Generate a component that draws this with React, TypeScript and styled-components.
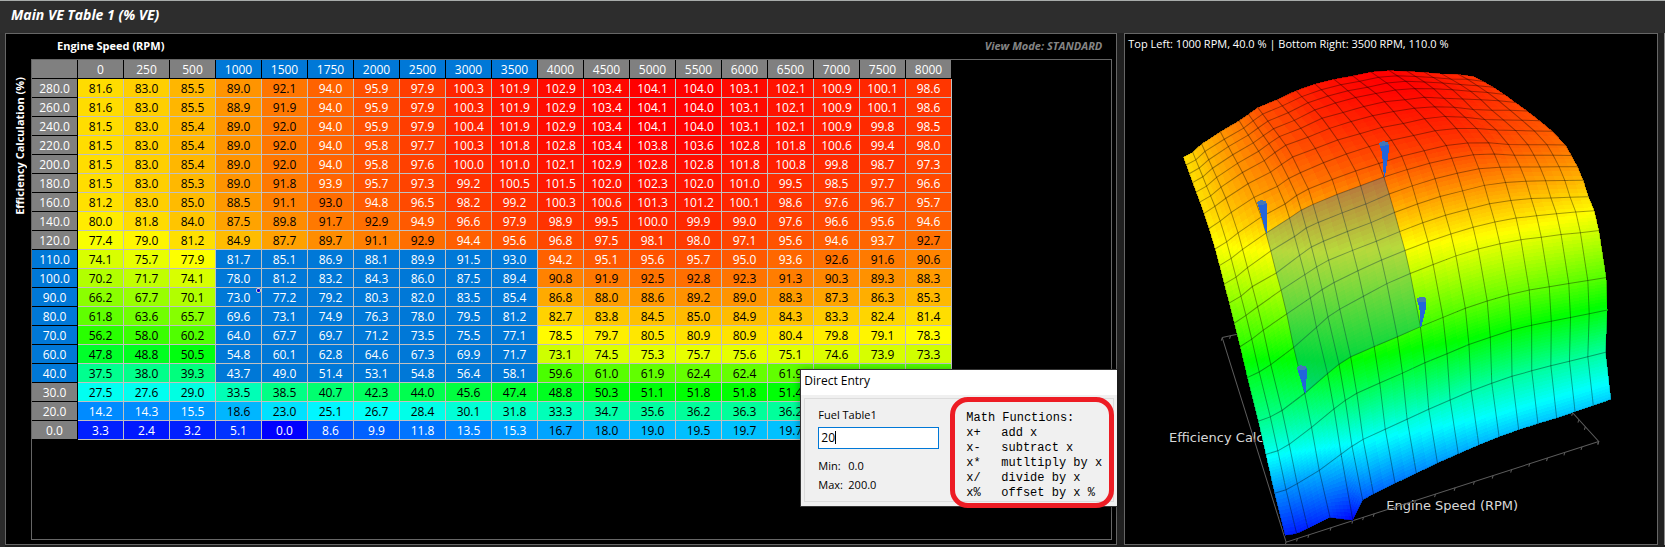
import React from "react";
import styled, { createGlobalStyle } from "styled-components";

const RPM = [0, 250, 500, 1000, 1500, 1750, 2000, 2500, 3000, 3500, 4000, 4500, 5000, 5500, 6000, 6500, 7000, 7500, 8000];

// Each row: engine load, then one VE value for every RPM column.
const ROWS: [number, number[]][] = [
  [280, [81.6, 83.0, 85.5, 89.0, 92.1, 94.0, 95.9, 97.9, 100.3, 101.9, 102.9, 103.4, 104.1, 104.0, 103.1, 102.1, 100.9, 100.1, 98.6]],
  [260, [81.6, 83.0, 85.5, 88.9, 91.9, 94.0, 95.9, 97.9, 100.3, 101.9, 102.9, 103.4, 104.1, 104.0, 103.1, 102.1, 100.9, 100.1, 98.6]],
  [240, [81.5, 83.0, 85.4, 89.0, 92.0, 94.0, 95.9, 97.9, 100.4, 101.9, 102.9, 103.4, 104.1, 104.0, 103.1, 102.1, 100.9, 99.8, 98.5]],
  [220, [81.5, 83.0, 85.4, 89.0, 92.0, 94.0, 95.8, 97.7, 100.3, 101.8, 102.8, 103.4, 103.8, 103.6, 102.8, 101.8, 100.6, 99.4, 98.0]],
  [200, [81.5, 83.0, 85.4, 89.0, 92.0, 94.0, 95.8, 97.6, 100.0, 101.0, 102.1, 102.9, 102.8, 102.8, 101.8, 100.8, 99.8, 98.7, 97.3]],
  [180, [81.5, 83.0, 85.3, 89.0, 91.8, 93.9, 95.7, 97.3, 99.2, 100.5, 101.5, 102.0, 102.3, 102.0, 101.0, 99.5, 98.5, 97.7, 96.6]],
  [160, [81.2, 83.0, 85.0, 88.5, 91.1, 93.0, 94.8, 96.5, 98.2, 99.2, 100.3, 100.6, 101.3, 101.2, 100.1, 98.6, 97.6, 96.7, 95.7]],
  [140, [80.0, 81.8, 84.0, 87.5, 89.8, 91.7, 92.9, 94.9, 96.6, 97.9, 98.9, 99.5, 100.0, 99.9, 99.0, 97.6, 96.6, 95.6, 94.6]],
  [120, [77.4, 79.0, 81.2, 84.9, 87.7, 89.7, 91.1, 92.9, 94.4, 95.6, 96.8, 97.5, 98.1, 98.0, 97.1, 95.6, 94.6, 93.7, 92.7]],
  [110, [74.1, 75.7, 77.9, 81.7, 85.1, 86.9, 88.1, 89.9, 91.5, 93.0, 94.2, 95.1, 95.6, 95.7, 95.0, 93.6, 92.6, 91.6, 90.6]],
  [100, [70.2, 71.7, 74.1, 78.0, 81.2, 83.2, 84.3, 86.0, 87.5, 89.4, 90.8, 91.9, 92.5, 92.8, 92.3, 91.3, 90.3, 89.3, 88.3]],
  [90, [66.2, 67.7, 70.1, 73.0, 77.2, 79.2, 80.3, 82.0, 83.5, 85.4, 86.8, 88.0, 88.6, 89.2, 89.0, 88.3, 87.3, 86.3, 85.3]],
  [80, [61.8, 63.6, 65.7, 69.6, 73.1, 74.9, 76.3, 78.0, 79.5, 81.2, 82.7, 83.8, 84.5, 85.0, 84.9, 84.3, 83.3, 82.4, 81.4]],
  [70, [56.2, 58.0, 60.2, 64.0, 67.7, 69.7, 71.2, 73.5, 75.5, 77.1, 78.5, 79.7, 80.5, 80.9, 80.9, 80.4, 79.8, 79.1, 78.3]],
  [60, [47.8, 48.8, 50.5, 54.8, 60.1, 62.8, 64.6, 67.3, 69.9, 71.7, 73.1, 74.5, 75.3, 75.7, 75.6, 75.1, 74.6, 73.9, 73.3]],
  [40, [37.5, 38.0, 39.3, 43.7, 49.0, 51.4, 53.1, 54.8, 56.4, 58.1, 59.6, 61.0, 61.9, 62.4, 62.4, 61.9, 61.4, 60.9, 60.4]],
  [30, [27.5, 27.6, 29.0, 33.5, 38.5, 40.7, 42.3, 44.0, 45.6, 47.4, 48.8, 50.3, 51.1, 51.8, 51.8, 51.4, 51.0, 50.7, 50.3]],
  [20, [14.2, 14.3, 15.5, 18.6, 23.0, 25.1, 26.7, 28.4, 30.1, 31.8, 33.3, 34.7, 35.6, 36.2, 36.3, 36.2, 36.0, 35.8, 35.6]],
  [0, [3.3, 2.4, 3.2, 5.1, 0.0, 8.6, 9.9, 11.8, 13.5, 15.3, 16.7, 18.0, 19.0, 19.5, 19.7, 19.7, 20.0, 20.4, 20.8]],
];

const MAX_VALUE = 104.1;

const rpmSelected = (rpm: number) => rpm >= 1000 && rpm <= 3500;
const loadSelected = (load: number) => load >= 40 && load <= 110;
const valueAt = (rpm: number, load: number) => ROWS.find((r) => r[0] === load)![1][RPM.indexOf(rpm)];

const STOPS = [
  [0, 0, 255],
  [0, 255, 255],
  [0, 255, 0],
  [255, 255, 0],
  [255, 0, 0],
];

function heat(value: number): string {
  const t = Math.min(3.9999, Math.max(0, (value / MAX_VALUE) * 4));
  const i = Math.floor(t);
  const [r, g, b] = STOPS[i].map((c, k) => Math.round(c + (STOPS[i + 1][k] - c) * (t - i)));
  return `rgb(${r},${g},${b})`;
}

type Point = [number, number];

// Perspective camera: rows give screen x, screen y and depth for (rpm, load, value, 1).
const CAMERA = [
  [1.73777, -0.70033, 0.00865, -0.56567],
  [-0.37744, -0.94126, -1.34766, 1.20742],
  [0.17727, 0.43168, -0.32604, 1],
];

function project(rpm: number, load: number, value: number): Point {
  const v = [rpm / 8000, load / 280, value / 100, 1];
  const [x, y, w] = CAMERA.map((row) => row.reduce((sum, m, i) => sum + m * v[i], 0));
  return [274 + (200 * x) / w, 242 + (200 * y) / w];
}

const toPoints = (list: Point[]) => list.map(([x, y]) => `${x.toFixed(1)},${y.toFixed(1)}`).join(" ");

function Surface() {
  const fills: React.ReactNode[] = [];
  for (let r = 0; r < ROWS.length - 1; r++) {
    for (let c = 0; c < RPM.length - 1; c++) {
      const [a, b] = [ROWS[r][1][c], ROWS[r][1][c + 1]];
      const [d, e] = [ROWS[r + 1][1][c], ROWS[r + 1][1][c + 1]];
      const at = (s: number, t: number): [number, number, number] => [
        RPM[c] + (RPM[c + 1] - RPM[c]) * s,
        ROWS[r][0] + (ROWS[r + 1][0] - ROWS[r][0]) * t,
        (a * (1 - s) + b * s) * (1 - t) + (d * (1 - s) + e * s) * t,
      ];
      const quad = (s0: number, t0: number, s1: number, t1: number) => (
        <polygon
          key={`${r}-${c}-${s0}-${t0}-${s1}`}
          points={toPoints([at(s0, t0), at(s1, t0), at(s1, t1), at(s0, t1)].map((p) => project(...p)))}
          fill={heat(at((s0 + s1) / 2, (t0 + t1) / 2)[2])}
        />
      );
      // The whole cell goes first so that no background shows between its slices.
      fills.push(quad(0, 0, 1, 1));
      const across = Math.max(2, Math.min(8, Math.ceil(Math.max(Math.abs(a - b), Math.abs(d - e)))));
      const down = Math.max(3, Math.min(16, Math.ceil(Math.max(Math.abs(a - d), Math.abs(b - e)))));
      for (let i = 0; i < across; i++)
        for (let j = 0; j < down; j++) fills.push(quad(i / across, j / down, (i + 1) / across, (j + 1) / down));
    }
  }

  const lines = [
    ...ROWS.map(([load, values]) => toPoints(values.map((z, c) => project(RPM[c], load, z)))),
    ...RPM.map((rpm, c) => toPoints(ROWS.map(([load, values]) => project(rpm, load, values[c])))),
  ];

  const loads = ROWS.map(([load]) => load).filter(loadSelected);
  const cols = RPM.filter(rpmSelected);
  const outline = [
    ...cols.map((x) => [x, 110]),
    ...loads.map((l) => [3500, l]),
    ...[...cols].reverse().map((x) => [x, 40]),
    ...[...loads].reverse().map((l) => [1000, l]),
  ].map(([x, l]) => project(x, l, valueAt(x, l)));

  return (
    <>
      <g shapeRendering="crispEdges">{fills}</g>
      <g fill="none" stroke="#000" strokeOpacity={0.36}>
        {lines.map((p) => (
          <polyline key={p} points={p} />
        ))}
      </g>
      <polygon points={toPoints(outline)} fill="#0078d7" fillOpacity={0.28} />
    </>
  );
}

const PINS: { rpm: number; load: number; left: Point; right: Point }[] = [
  { rpm: 3500, load: 110, left: [-5, -35], right: [5, -33] },
  { rpm: 1000, load: 110, left: [-9, -32], right: [1, -30] },
  { rpm: 3500, load: 40, left: [-4, -29], right: [6, -26] },
  { rpm: 1000, load: 40, left: [-8, -27], right: [2, -25] },
];

function Pins() {
  return (
    <g shapeRendering="crispEdges">
      {PINS.map(({ rpm, load, left, right }) => {
        const [x, y] = project(rpm, load, valueAt(rpm, load));
        const [lx, ly] = [x + left[0], y + left[1]];
        const [rx, ry] = [x + right[0], y + right[1]];
        return (
          <g key={`${rpm}-${load}`}>
            <polygon points={toPoints([[lx, ly + 1], [rx, ry], [rx, ry + 6], [x + 1, y], [x, y], [lx + 3, ly + 10]])} fill="#2265dc" />
            <polygon points={toPoints([[lx, ly + 1], [lx + 4, ly - 1], [rx - 1, ly], [rx, ry + 1], [lx + 3, ly + 4], [lx + 1, ly + 4]])} fill="#4577b8" />
          </g>
        );
      })}
    </g>
  );
}

function Axes() {
  const corners = [
    [0, 280],
    [0, 0],
    [8000, 0],
    [8000, 280],
    [0, 280],
  ].map(([rpm, load]) => project(rpm, load, 0));
  const ticks = [...RPM.map((rpm) => project(rpm, 0, 0)), ...ROWS.map(([load]) => project(8000, load, 0)), ...RPM.map((rpm) => project(rpm, 280, 0))];
  return (
    <g stroke="#5c5c5c" fill="none">
      <polyline points={toPoints(corners)} />
      {ticks.map(([x, y], i) => (
        <line key={i} x1={x} y1={y} x2={x - 1} y2={y + 3} />
      ))}
    </g>
  );
}

const GlobalStyle = createGlobalStyle`
  * { box-sizing: border-box; }
  body { margin: 0; background: #202020; color: #fff; font: 12px/18px "Open Sans", "Segoe UI", sans-serif; }
`;

const Page = styled.div`
  display: flex;
  flex-direction: column;
  min-height: 100vh;
  border-top: 1px solid #a8acaa;
`;

const TitleBar = styled.header`
  display: flex;
  align-items: center;
  height: 32px;
  padding: 0 11px 4px;
  background: #2d2d2d;
`;

const Title = styled.h1`
  margin: 0;
  font-size: 14px;
  font-style: italic;
  font-weight: bold;
  line-height: 20px;
`;

const Workspace = styled.main`
  flex: 1;
  display: flex;
  gap: 7px;
  padding-bottom: 3px;
  border-left: 5px solid #2b2b2b;
`;

const Panel = styled.section<{ $grow: number }>`
  position: relative;
  display: flex;
  flex-direction: column;
  flex: ${(p) => p.$grow} 1 0;
  min-width: 0;
  background: #000;
  border: 1px solid #666;
`;

const NextPanelEdge = styled.div`
  width: 1px;
  margin-left: -1px;
  background: #8a8a8a;
`;

const PanelHeading = styled.div`
  display: flex;
  justify-content: space-between;
  height: 25px;
  padding: 3px 14px 0 51px;
  font-size: 11px;
  font-weight: bold;
`;

const ViewMode = styled.span`
  color: #858585;
  font-style: italic;
`;

const TableArea = styled.div`
  flex: 1;
  display: flex;
  padding: 0 4px 4px 0;
`;

const VerticalAxisName = styled.div`
  width: 25px;
  margin-top: 18px;
  padding-right: 2px;
  writing-mode: vertical-rl;
  transform: rotate(180deg);
  align-self: flex-start;
  font-size: 11px;
  font-weight: bold;
  line-height: 23px;
`;

const TableFrame = styled.div`
  flex: 1;
  min-width: 0;
  border: 1px solid #666;
  overflow: hidden;
`;

const Grid = styled.table`
  table-layout: fixed;
  width: 920px;
  border-collapse: separate;
  border-spacing: 0;
`;

const HeaderCell = styled.th<{ $selected?: boolean }>`
  height: 19px;
  padding: 1px 0 0;
  font-weight: normal;
  line-height: 17px;
  color: #fff;
  background: ${(p) => (p.$selected ? "#0078d7" : "#808080")};
  border-right: 1px solid #000;
  border-bottom: 1px solid #000;
`;

const Cell = styled.td<{ $bg: string; $light: boolean }>`
  position: relative;
  height: 19px;
  padding: 1px 0 0;
  line-height: 17px;
  text-align: center;
  color: ${(p) => (p.$light ? "#fff" : "#000")};
  background: ${(p) => p.$bg};
  border-right: 1px solid #c0c0c0;
  border-bottom: 1px solid #c0c0c0;
`;

const CellHandle = styled.span`
  position: absolute;
  top: 0;
  right: 0;
  width: 5px;
  height: 5px;
  border: 1px solid #d0d0d0;
  border-radius: 2px;
  background: #0000d0;
`;

const Dialog = styled.form`
  position: absolute;
  right: -1px;
  bottom: 37px;
  width: 317px;
  color: #000;
  background: #f0f0f0;
  border: 1px solid #333;
  border-right: 0;
  box-shadow: 0 1px 8px rgba(0, 0, 0, 0.4);
`;

const DialogTitle = styled.h2`
  margin: 0;
  padding: 0 3px;
  height: 25px;
  background: #fff;
  font-size: 12px;
  line-height: 22px;
  font-weight: normal;
`;

const DialogBody = styled.div`
  display: flex;
  justify-content: space-between;
  align-items: flex-start;
  margin: 3px 3px 4px;
  height: 104px;
  border: 1px solid #dcdcdc;
`;

const Entry = styled.div`
  width: 121px;
  margin: 8px 0 0 13px;
  font-size: 11px;
`;

const EntryLabel = styled.label`
  display: block;
  line-height: 16px;
`;

const EntryField = styled.div`
  position: relative;
  margin: 4px 0 7px;
`;

const EntryInput = styled.input`
  display: block;
  width: 100%;
  height: 22px;
  padding: 0 2px;
  border: 1px solid #0078d7;
  outline: 0;
  background: #fff;
  color: #000;
  font: 12px "Open Sans", "Segoe UI", sans-serif;
`;

const Caret = styled.span`
  position: absolute;
  left: 17px;
  top: 4px;
  width: 1px;
  height: 13px;
  background: #000;
`;

const Limit = styled.div`
  display: grid;
  grid-template-columns: 30px auto;
  line-height: 19px;
`;

const MathBox = styled.div`
  width: 164px;
  height: 111px;
  margin: -2px -1px 0 0;
  padding: 9px 0 0 11px;
  border: 5px solid #ed1c24;
  border-radius: 18px;
  font: 12px/15px "Liberation Mono", "Courier New", monospace;
  white-space: nowrap;
`;

const MathList = styled.dl`
  display: grid;
  grid-template-columns: 35px auto;
  margin: 0;
`;

const MathTerm = styled.dt`
  margin: 0;
`;

const MathText = styled.dd`
  margin: 0;
`;

const SelectionInfo = styled.div`
  height: 24px;
  padding: 1px 0 0 3px;
  font-size: 11px;
`;

const Scene = styled.svg`
  display: block;
  flex: 1;
  width: 100%;
  min-height: 0;
  overflow: visible;
`;

const AxisLabels = styled.g`
  fill: #d8d8d8;
  font: 13px "DejaVu Sans", Verdana, sans-serif;
`;

const MATH = [
  ["x+", "add x"],
  ["x-", "subtract x"],
  ["x*", "mutltiply by x"],
  ["x/", "divide by x"],
  ["x%", "offset by x %"],
];

function VeTable() {
  return (
    <Grid>
      <thead>
        <tr>
          <HeaderCell />
          {RPM.map((rpm) => (
            <HeaderCell key={rpm} scope="col" $selected={rpmSelected(rpm)}>
              {rpm}
            </HeaderCell>
          ))}
        </tr>
      </thead>
      <tbody>
        {ROWS.map(([load, values]) => (
          <tr key={load}>
            <HeaderCell scope="row" $selected={loadSelected(load)}>
              {load.toFixed(1)}
            </HeaderCell>
            {values.map((v, c) => {
              const selected = rpmSelected(RPM[c]) && loadSelected(load);
              return (
                <Cell key={RPM[c]} $bg={selected ? "#0078d7" : heat(v)} $light={selected || v > 93.3 || v < 16}>
                  {v.toFixed(1)}
                  {load === 90 && RPM[c] === 1000 && <CellHandle />}
                </Cell>
              );
            })}
          </tr>
        ))}
      </tbody>
    </Grid>
  );
}

function DirectEntry() {
  return (
    <Dialog>
      <DialogTitle>Direct Entry</DialogTitle>
      <DialogBody>
        <Entry>
          <EntryLabel htmlFor="entry">Fuel Table1</EntryLabel>
          <EntryField>
            <EntryInput id="entry" defaultValue="20" />
            <Caret />
          </EntryField>
          <Limit>
            <span>Min:</span>
            <span>0.0</span>
          </Limit>
          <Limit>
            <span>Max:</span>
            <span>200.0</span>
          </Limit>
        </Entry>
        <MathBox>
          Math Functions:
          <MathList>
            {MATH.map(([term, text]) => (
              <React.Fragment key={term}>
                <MathTerm>{term}</MathTerm>
                <MathText>{text}</MathText>
              </React.Fragment>
            ))}
          </MathList>
        </MathBox>
      </DialogBody>
    </Dialog>
  );
}

export default function App() {
  return (
    <Page>
      <GlobalStyle />
      <TitleBar>
        <Title>Main VE Table 1 (% VE)</Title>
      </TitleBar>
      <Workspace>
        <Panel $grow={1113}>
          <PanelHeading>
            <span>Engine Speed (RPM)</span>
            <ViewMode>View Mode: STANDARD</ViewMode>
          </PanelHeading>
          <TableArea>
            <VerticalAxisName>Efficiency Calculation (%)</VerticalAxisName>
            <TableFrame>
              <VeTable />
            </TableFrame>
          </TableArea>
          <DirectEntry />
        </Panel>
        <Panel $grow={533}>
          <SelectionInfo>Top Left: 1000 RPM, 40.0 % | Bottom Right: 3500 RPM, 110.0 %</SelectionInfo>
          <Scene viewBox="0 0 531 485" role="img" aria-label="VE surface">
            <AxisLabels>
              <text x={44} y={383}>
                Efficiency Calculation (%)
              </text>
              <text x={261} y={451}>
                Engine Speed (RPM)
              </text>
            </AxisLabels>
            <Axes />
            <Surface />
            <Pins />
          </Scene>
        </Panel>
        <NextPanelEdge />
      </Workspace>
    </Page>
  );
}
